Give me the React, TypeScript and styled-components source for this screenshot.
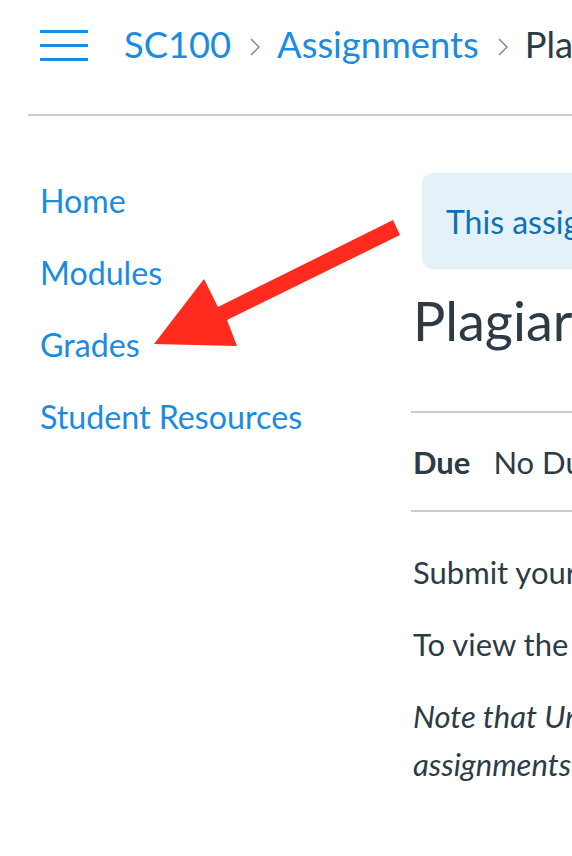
import React from "react";
import styled, { createGlobalStyle } from "styled-components";

const Global = createGlobalStyle`
  html, body { margin: 0; padding: 0; background: #fff; }
  body { font-family: Lato, "Open Sans", sans-serif; color: #2d3b45; }
`;

const Page = styled.div`
  position: relative;
  width: 572px;
  height: 856px;
  overflow: hidden;
  background: #fff;
`;

const Header = styled.header`
  display: flex;
  align-items: center;
  height: 88px;
  padding-left: 40px;
  white-space: nowrap;
`;

const HeaderRule = styled.div`
  margin-left: 28px;
  margin-top: 26px;
  height: 2px;
  background: #c7cdd1;
`;

const Burger = styled.div`
  flex: none;
  display: flex;
  flex-direction: column;
  gap: 11px;
  width: 48px;
  margin-right: 36px;
  margin-top: 2px;
  span {
    display: block;
    height: 3px;
    background: #1a8ce0;
  }
`;

const Crumbs = styled.nav`
  flex: none;
  display: flex;
  align-items: center;
  font-size: 36.3px;
  line-height: 44px;
  margin-top: -1px;
`;

const Crumb = styled.span<{ $current?: boolean }>`
  color: ${(p) => (p.$current ? "#2d3b45" : "#1a8ce0")};
`;

const Sep = styled.svg`
  margin: 0 17px 0 19px;
  position: relative;
  top: 3px;
`;

const Main = styled.main`
  display: flex;
  padding-top: 57px;
`;

const Sidebar = styled.ul`
  list-style: none;
  margin: 0;
  padding: 0 0 0 40px;
  width: 411px;
  flex: none;
  box-sizing: border-box;
`;

const NavItem = styled.li`
  font-size: 32.2px;
  line-height: 48px;
  padding: 4px 0 20px;
  color: #1a8ce0;
  white-space: nowrap;
`;

const Content = styled.section`
  flex: none;
  width: 600px;
  white-space: nowrap;
`;

const Alert = styled.div`
  margin-left: 11px;
  height: 96px;
  box-sizing: border-box;
  padding: 0 24px;
  display: flex;
  align-items: center;
  background: #e4f1f8;
  border-radius: 11px;
  font-size: 32px;
  color: #0c72b8;
`;

const Title = styled.h1`
  margin: 18px 0 0 2px;
  font-size: 54px;
  line-height: 68px;
  font-weight: 400;
  color: #2d3b45;
`;

const DetailRow = styled.div`
  margin-top: 56px;
  border-top: 2px solid #c7cdd1;
  border-bottom: 2px solid #c7cdd1;
  height: 97px;
  display: flex;
  align-items: center;
  padding-left: 2px;
  font-size: 31px;
  gap: 23px;
`;

const Label = styled.strong`
  font-weight: 700;
`;

const Body = styled.div`
  padding: 36px 0 0 2px;
  font-size: 31px;
  line-height: 48px;
  p {
    margin: 0 0 24px;
  }
  em {
    font-style: italic;
  }
`;

const Arrow = styled.svg`
  position: absolute;
  left: 0;
  top: 0;
  pointer-events: none;
`;

const Chevron = () => (
  <Sep width="10" height="18" viewBox="0 0 10 18">
    <path d="M1 1 L9 9 L1 17" fill="none" stroke="#7d8a93" strokeWidth="1.5" />
  </Sep>
);

export default function App() {
  return (
    <Page>
      <Global />
      <Header>
        <Burger>
          <span />
          <span />
          <span />
        </Burger>
        <Crumbs>
          <Crumb>SC100</Crumb>
          <Chevron />
          <Crumb>Assignments</Crumb>
          <Chevron />
          <Crumb $current>Plagiarism Tutorial</Crumb>
        </Crumbs>
      </Header>
      <HeaderRule />
      <Main>
        <Sidebar>
          <NavItem>Home</NavItem>
          <NavItem>Modules</NavItem>
          <NavItem>Grades</NavItem>
          <NavItem>Student Resources</NavItem>
        </Sidebar>
        <Content>
          <Alert>This assignment is locked until you submit.</Alert>
          <Title>Plagiarism Tutorial</Title>
          <DetailRow>
            <Label>Due</Label>
            <span>No Due Date</span>
          </DetailRow>
          <Body>
            <p>Submit your certificate here.</p>
            <p>To view the tutorial, click the link.</p>
            <p>
              <em>
                Note that University policy applies to all
                <br />
                assignments submitted in this course.
              </em>
            </p>
          </Body>
        </Content>
      </Main>
      <Arrow width="572" height="856" viewBox="0 0 572 856">
        <polygon
          points="393,220 218,307 204,279 154,344 237,346 227,320 400,235"
          fill="#ff2b1f"
        />
      </Arrow>
    </Page>
  );
}
